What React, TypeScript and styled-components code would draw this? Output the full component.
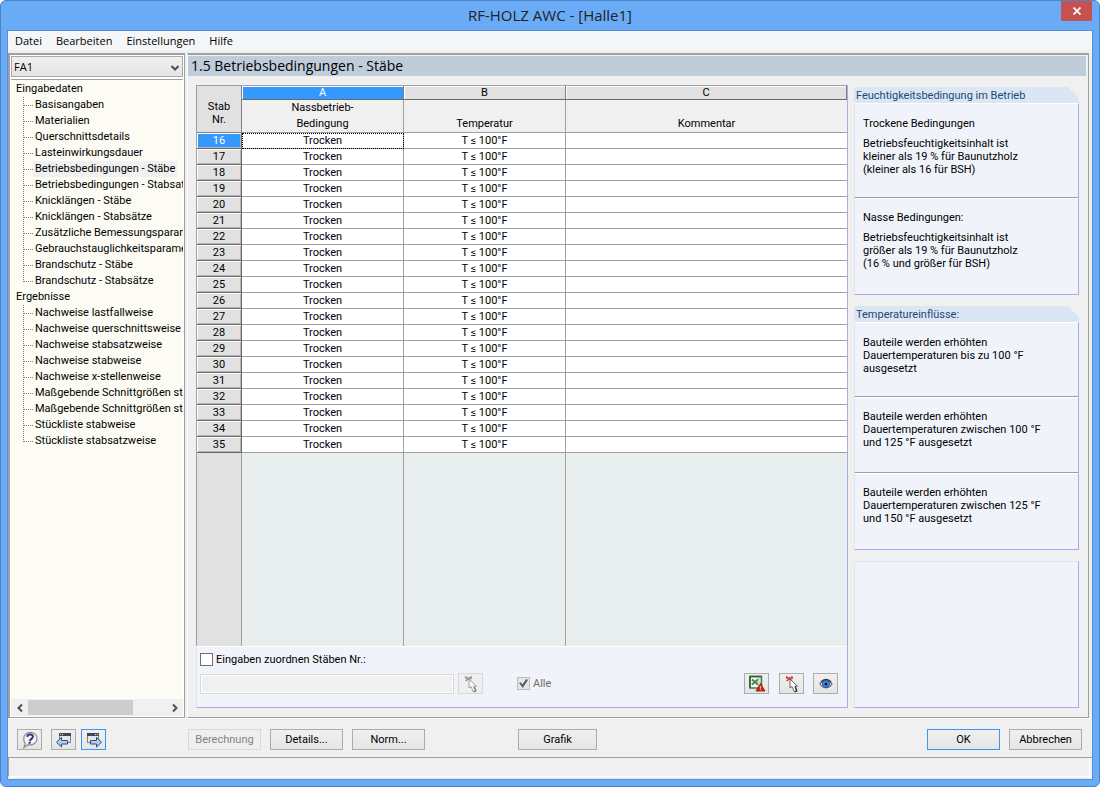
import React from 'react';
import styled, { createGlobalStyle, css } from 'styled-components';

const GlobalStyle = createGlobalStyle`
  *, *::before, *::after { box-sizing: border-box; }
  body {
    margin: 0;
    background: #fff;
    color: #000;
    font: 11px/13px Roboto, "Liberation Sans", sans-serif;
  }
  button, input, select { font: inherit; color: inherit; margin: 0; }
`;

const Window = styled.div`
  display: flex;
  flex-direction: column;
  min-height: 100vh;
  padding: 0 7px 7px;
  background: #6aabf7;
  border: 1px solid #4c84c0;
  border-radius: 6px;
`;

const TitleBar = styled.header`
  display: flex;
  height: 30px;
  padding-left: 31px;
`;

const WindowTitle = styled.h1`
  flex: 1;
  margin: 0;
  text-align: center;
  font: 15px/28px "Open Sans", sans-serif;
  color: #222;
`;

const CloseButton = styled.button`
  display: grid;
  place-items: center;
  width: 31px;
  height: 20px;
  padding: 0;
  border: 0;
  background: #c75050;
`;

const Client = styled.div`
  flex: 1;
  display: flex;
  flex-direction: column;
  background: #f0f0f0;
  outline: 1px solid #5390d8;
`;

const MenuBar = styled.nav`
  display: flex;
  height: 19px;
  margin-bottom: 3px;
  background: #f5f6f7;
`;

const MenuButton = styled.button`
  padding: 0 7px;
  border: 0;
  background: none;
  font: 11px/19px "Open Sans", sans-serif;
`;

const Body = styled.div`
  flex: 1;
  display: flex;
  gap: 2px;
  padding-right: 3px;
  border-bottom: 1px solid #fff;
`;

const Sidebar = styled.aside`
  display: flex;
  flex-direction: column;
  width: 177px;
  padding: 1px;
  background: #fff;
  border: 1px solid #a0a0a0;
  border-top-width: 2px;
  border-left-width: 2px;
`;

const CaseSelect = styled.div`
  position: relative;
  margin-bottom: 2px;
  svg { position: absolute; right: 4px; top: 8px; pointer-events: none; }
`;

const Select = styled.select`
  display: block;
  width: 100%;
  height: 21px;
  padding: 0 2px;
  appearance: none;
  border: 1px solid #a9a9a9;
  border-radius: 0;
  background: linear-gradient(#f0f0f0, #e4e4e4);
  font: 11px/19px "Open Sans", sans-serif;
`;

const Tree = styled.div`
  flex: 1;
  padding-top: 1px;
  overflow: hidden;
  border-top: 1px solid #a0a0a0;
  background: #fcfcf4;
`;

const TreeGroup = styled.section`
  h2 {
    margin: 0;
    padding-left: 5px;
    font-size: 11px;
    font-weight: 400;
    line-height: 16px;
  }
  ul { margin: 0; padding: 0 0 0 12px; list-style: none; }
`;

const TreeItem = styled.li`
  display: flex;
  height: 16px;
  &::before {
    content: '';
    flex: none;
    width: 10px;
    height: 9px;
    border-left: 1px dotted #808080;
    border-bottom: 1px dotted #808080;
  }
  &:not(:last-child) {
    background: repeating-linear-gradient(#808080 0 1px, transparent 1px 2px) left / 1px 100% no-repeat;
  }
  &:not(:last-child)::before { border-left: 0; }
`;

const TreeLink = styled.a<{ $active?: boolean }>`
  padding: 0 2px;
  line-height: 16px;
  color: inherit;
  text-decoration: none;
  white-space: nowrap;
  ${p => p.$active && css`background: #f0f0f0;`}
`;

const ScrollBar = styled.div`
  display: flex;
  height: 17px;
  padding: 1px 0;
  background: #f0f0f0;
`;

const ScrollArrow = styled.button`
  display: grid;
  place-items: center;
  width: 17px;
  padding: 0;
  border: 0;
  background: none;
`;

const ScrollTrack = styled.div`
  flex: 1;
  &::before { content: ''; display: block; width: 76%; height: 15px; background: #cdcdcd; }
`;

const Main = styled.main`
  flex: 1;
  display: flex;
  flex-direction: column;
  min-width: 0;
  padding: 1px 2px 9px 0;
  border: 1px solid #a0a0a0;
  border-top-width: 2px;
  border-left-color: #fff;
`;

const PageTitle = styled.h2`
  margin: 0 0 9px;
  padding-left: 3px;
  background: #bfccda;
  font: 14px/20px "Open Sans", sans-serif;
`;

const Columns = styled.div`
  flex: 1;
  display: flex;
  gap: 6px;
  padding: 0 7px 0 8px;
`;

const GridPanel = styled.section`
  flex: 1;
  display: flex;
  flex-direction: column;
  border-top: 1px solid #a0a0a0;
  border-right: 1px solid #aaaaee;
`;

const Table = styled.table`
  width: 100%;
  table-layout: fixed;
  border-collapse: separate;
  border-spacing: 0;
  border-left: 1px solid #a0a0a0;
  th, td { padding: 0; font-weight: 400; text-align: center; }
`;

const NumberCol = styled.col` width: 45px; `;
const DataCol = styled.col` width: 162px; `;

const ColumnLetter = styled.th<{ $active?: boolean }>`
  height: 14px;
  line-height: 13px;
  background: ${p => (p.$active ? '#3399ff' : '#e1e1e1')};
  color: ${p => (p.$active ? '#fff' : '#000')};
  border-right: 1px solid #808080;
  border-bottom: 1px solid #696969;
  box-shadow: inset 1px 1px #fff;
`;

const CornerHead = styled.th`
  && { padding-top: 8px; }
  height: 47px;
  background: #e1e1e1;
  border-right: 1px solid #808080;
  border-bottom: 1px solid #808080;
  vertical-align: middle;
`;

const ColumnTitle = styled.th`
  height: 33px;
  line-height: 16px;
  vertical-align: bottom;
  background: #f0f0f0;
  border-bottom: 1px solid #a0a0a0;
  &:not(:last-child) { border-right: 1px solid #a0a0a0; }
`;

const RowNumber = styled.th<{ $active?: boolean }>`
  height: 16px;
  line-height: 15px;
  background: ${p => (p.$active ? '#3399ff' : '#e1e1e1')};
  color: ${p => (p.$active ? '#fff' : '#000')};
  border-right: 1px solid #696969;
  border-bottom: 1px solid #696969;
  box-shadow: inset 1px 1px #fff, inset -1px -1px #b4b4b4;
`;

const Cell = styled.td<{ $active?: boolean }>`
  height: 16px;
  line-height: 15px;
  background: #fff;
  border-bottom: 1px solid #a0a0a0;
  &:not(:last-child) { border-right: 1px solid #a0a0a0; }
  ${p => p.$active && css`outline: 1px dotted #000; outline-offset: -1px;`}
`;

const EmptyGrid = styled.div`
  flex: 1;
  display: grid;
  grid-template-columns: 46px 162px 162px 1fr;
  border-bottom: 1px solid #fff;
  background: #e8eeee;
  span { border-right: 1px solid #a0a0a0; }
  span:first-child { background: #e1e1e1; border-left: 1px solid #a0a0a0; }
  span:last-child { border-right: 0; }
`;

const AssignBar = styled.div`
  display: flex;
  flex-direction: column;
  gap: 7px;
  padding: 6px 9px 13px 3px;
  background: #f0f4fa;
  border-left: 1px solid #dbe6f5;
  border-bottom: 1px solid #aaaaee;
`;

const AssignRow = styled.div`
  display: flex;
  align-items: center;
`;

const CheckLabel = styled.label<{ $disabled?: boolean }>`
  display: flex;
  align-items: center;
  gap: 3px;
  color: ${p => (p.$disabled ? '#6d6d6d' : '#000')};
`;

const CheckBox = styled.input`
  display: grid;
  place-items: center;
  width: 13px;
  height: 13px;
  appearance: none;
  border: 1px solid #707070;
  background: #fff;
  &:disabled { border-color: #bcbcbc; background: #e6e6e6; }
  &:checked::after {
    content: '';
    width: 9px;
    height: 9px;
    background: #606060;
    clip-path: polygon(0 45%, 20% 35%, 38% 58%, 80% 0, 100% 12%, 42% 100%);
  }
`;

const MemberInput = styled.input`
  width: 254px;
  height: 20px;
  margin-right: 4px;
  border: 1px solid #d9d9d9;
  box-shadow: inset 0 0 0 1px #fff;
  background: #f0f0f0;
`;

const Spacer = styled.span<{ $width?: number }>`
  flex: ${p => (p.$width ? `0 0 ${p.$width}px` : '1')};
`;

const PushButton = styled.button<{ $width?: number; $default?: boolean }>`
  display: grid;
  place-items: center;
  flex: none;
  width: ${p => p.$width ?? 73}px;
  height: 21px;
  padding: 0;
  border: 1px solid ${p => (p.$default ? '#3c96f0' : '#acacac')};
  background: linear-gradient(#f0f0f0, #e5e5e5);
  &:disabled { border-color: #d9d9d9; background: #efefef; color: #838383; }
  &:disabled svg { filter: grayscale(1); opacity: 0.6; }
`;

const InfoColumn = styled.aside`
  display: flex;
  flex-direction: column;
  gap: 11px;
  width: 225px;
  padding-top: 2px;
`;

const InfoGroup = styled.section`
  h3 {
    margin: 0;
    height: 16px;
    padding-left: 2px;
    background: #dbe6f5;
    clip-path: polygon(0 0, calc(100% - 11px) 0, 100% 11px, 100% 100%, 0 100%);
    font-size: 11px;
    font-weight: 400;
    line-height: 17px;
    color: #1c4a70;
  }
`;

const InfoBlock = styled.div<{ $height: number }>`
  min-height: ${p => p.$height}px;
  padding: 12px 8px 0;
  background: #f0f4fa;
  border-top: 1px solid #fff;
  border-left: 1px solid #dbe6f5;
  border-right: 1px solid #aaaaee;
  border-bottom: 1px solid #a0a0a0;
  &:first-of-type { padding-top: 13px; }
  &:last-child { border-bottom-color: #aaaaee; }
  p { margin: 0 0 7px; white-space: pre-line; }
`;

const PreviewBox = styled.div`
  flex: 1;
  background: #f0f4fa;
  border: 1px solid #dbe6f5;
  border-right-color: #aaaaee;
  border-bottom-color: #aaaaee;
`;

const Footer = styled.footer`
  display: flex;
  gap: 9px;
  padding: 10px 10px 7px 9px;
  border-bottom: 1px solid #a0a0a0;
`;

const PageButtons = styled.div`
  display: flex;
  gap: 5px;
`;

const StatusBar = styled.div`
  height: 19px;
  margin: 0 2px 2px 0;
  border-left: 1px solid #a0a0a0;
  border-right: 1px solid #fff;
  border-bottom: 1px solid #fff;
`;

const Chevron = ({ d }: { d: string }) => (
  <svg width="8" height="8" viewBox="0 0 8 8" fill="none" stroke="#505050" strokeWidth="2" aria-hidden="true">
    <path d={d} />
  </svg>
);

const HelpIcon = () => (
  <svg width="18" height="18" viewBox="0 0 18 18" aria-hidden="true">
    <path d="M9.500 1.500c3.900 0 6.500 2.500 6.500 6s-2.800 6.500-6.500 6.500c-.9 0-1.700-.1-2.400-.4L3 16.500l1.200-4.200C3.200 11.100 2.700 9.500 2.700 7.800c0-3.600 2.900-6.300 6.800-6.300z" fill="#f4f4f6" stroke="#909296" strokeWidth="1.300" />
    <path d="M6.300 5.900c.2-1.500 1.600-2.400 3.200-2.300 1.600.1 2.600 1 2.400 2.300-.3 1.900-2.700 2-3 4" fill="none" stroke="#2c3a80" strokeWidth="2" />
    <path d="M7.700 10.800h2.200l-.3 1.900H7.400z" fill="#2c3a80" />
  </svg>
);

const WindowArrowIcon = ({ next }: { next?: boolean }) => (
  <svg width="18" height="18" viewBox="0 0 18 18" aria-hidden="true">
    <g transform={next ? undefined : 'translate(18 0) scale(-1 1)'}>
      <rect x="2.500" y="2.500" width="11" height="9" fill="#e4e6ea" stroke="#7c828c" />
      <path d="M2 2h12v3H2z" fill="#3c4758" />
      <path d="M10 3h1v1h-1zM12 3h1v1h-1z" fill="#dfe5ee" />
      <path d="M5.500 9.500h6V6.500l5 4.700-5 4.800v-3h-6z" fill="#a9d0f8" stroke="#3b4a70" />
    </g>
  </svg>
);

const ExcelIcon = () => (
  <svg width="18" height="18" viewBox="0 0 18 18" aria-hidden="true">
    <rect x="2" y="1.500" width="11.500" height="11.500" fill="#f4f9f2" stroke="#47784a" strokeWidth="1.500" />
    <path d="M2 13V1.500h11.500" fill="none" stroke="#2c5e32" strokeWidth="1.500" />
    <path d="M9 4h4M10 7h3M9 10h3" stroke="#8fb98f" />
    <path d="M4 4.500l6 5M10 4.500l-6 5" stroke="#4a8550" strokeWidth="2.200" />
    <path d="M12.500 8.500l4.500 7.500H8z" fill="#d8231a" stroke="#8a130d" strokeWidth=".8" />
    <path d="M12.500 11v2.500M12.500 14.300v1" stroke="#ffc04a" strokeWidth="1.200" />
  </svg>
);

const PickIcon = () => (
  <svg width="18" height="18" viewBox="0 0 18 18" aria-hidden="true">
    <path d="M3 1.500l6 4M9.500 1.500l-6 4.500M3 3h7" stroke="#c8403c" strokeWidth="1.500" />
    <path d="M7 4v9l2-1.500 2.200 5c.2.600 2.800.2 2.500-1l-1.600-4.200h2.400z" fill="#fff" stroke="#666" />
    <path d="M12 11.500l1.800 4.300-2.200.9" fill="none" stroke="#222" strokeWidth="1.200" />
  </svg>
);

const EyeIcon = () => (
  <svg width="18" height="18" viewBox="0 0 18 18" aria-hidden="true">
    <path d="M3 9c3-5 9-5 12 0-3 5-9 5-12 0z" fill="#dfe9f8" stroke="#6a6f7a" strokeWidth="1.300" />
    <path d="M4 7c3-3.500 7-3.500 10 0" fill="none" stroke="#2b3040" strokeWidth="1.200" />
    <circle cx="9" cy="9" r="3.500" fill="#4a90ea" stroke="#23509c" />
    <circle cx="9" cy="9" r="1.500" fill="#0b1430" />
  </svg>
);

const tree = [
  {
    title: 'Eingabedaten',
    items: [
      'Basisangaben', 'Materialien', 'Querschnittsdetails', 'Lasteinwirkungsdauer',
      'Betriebsbedingungen - Stäbe', 'Betriebsbedingungen - Stabsatz', 'Knicklängen - Stäbe',
      'Knicklängen - Stabsätze', 'Zusätzliche Bemessungsparame', 'Gebrauchstauglichkeitsparamet',
      'Brandschutz - Stäbe', 'Brandschutz - Stabsätze',
    ],
  },
  {
    title: 'Ergebnisse',
    items: [
      'Nachweise lastfallweise', 'Nachweise querschnittsweise', 'Nachweise stabsatzweise',
      'Nachweise stabweise', 'Nachweise x-stellenweise', 'Maßgebende Schnittgrößen sta',
      'Maßgebende Schnittgrößen sta', 'Stückliste stabweise', 'Stückliste stabsatzweise',
    ],
  },
];

const currentPage = 'Betriebsbedingungen - Stäbe';
const members = Array.from({ length: 20 }, (_, i) => 16 + i);

export default function App() {
  return (
    <>
      <GlobalStyle />
      <Window>
        <TitleBar>
          <WindowTitle>RF-HOLZ AWC - [Halle1]</WindowTitle>
          <CloseButton aria-label="Schließen">
            <svg width="8" height="8" viewBox="0 0 8 8" stroke="#fff" strokeWidth="1.800">
              <path d="M.5.5l7 7M7.500.5l-7 7" />
            </svg>
          </CloseButton>
        </TitleBar>
        <Client>
          <MenuBar>
            {['Datei', 'Bearbeiten', 'Einstellungen', 'Hilfe'].map(m => <MenuButton key={m}>{m}</MenuButton>)}
          </MenuBar>
          <Body>
            <Sidebar>
              <CaseSelect>
                <Select aria-label="Bemessungsfall" defaultValue="FA1"><option>FA1</option></Select>
                <Chevron d="M0.500 2L4 5.500 7.500 2" />
              </CaseSelect>
              <Tree>
                {tree.map(group => (
                  <TreeGroup key={group.title}>
                    <h2>{group.title}</h2>
                    <ul>
                      {group.items.map((item, i) => (
                        <TreeItem key={i}>
                          <TreeLink href="#" $active={item === currentPage}>{item}</TreeLink>
                        </TreeItem>
                      ))}
                    </ul>
                  </TreeGroup>
                ))}
              </Tree>
              <ScrollBar>
                <ScrollArrow aria-label="Nach links"><Chevron d="M6 0.500L2.500 4 6 7.500" /></ScrollArrow>
                <ScrollTrack />
                <ScrollArrow aria-label="Nach rechts"><Chevron d="M2 0.500L5.500 4 2 7.500" /></ScrollArrow>
              </ScrollBar>
            </Sidebar>
            <Main>
              <PageTitle>1.5 Betriebsbedingungen - Stäbe</PageTitle>
              <Columns>
                <GridPanel>
                  <Table>
                    <colgroup><NumberCol /><DataCol /><DataCol /><col /></colgroup>
                    <thead>
                      <tr>
                        <CornerHead rowSpan={2}>Stab<br />Nr.</CornerHead>
                        <ColumnLetter $active>A</ColumnLetter>
                        <ColumnLetter>B</ColumnLetter>
                        <ColumnLetter>C</ColumnLetter>
                      </tr>
                      <tr>
                        <ColumnTitle>Nassbetrieb-<br />Bedingung</ColumnTitle>
                        <ColumnTitle>Temperatur</ColumnTitle>
                        <ColumnTitle>Kommentar</ColumnTitle>
                      </tr>
                    </thead>
                    <tbody>
                      {members.map((no, i) => (
                        <tr key={no}>
                          <RowNumber $active={i === 0}>{no}</RowNumber>
                          <Cell $active={i === 0}>Trocken</Cell>
                          <Cell>T ≤ 100°F</Cell>
                          <Cell />
                        </tr>
                      ))}
                    </tbody>
                  </Table>
                  <EmptyGrid><span /><span /><span /><span /></EmptyGrid>
                  <AssignBar>
                    <AssignRow>
                      <CheckLabel><CheckBox type="checkbox" />Eingaben zuordnen Stäben Nr.:</CheckLabel>
                    </AssignRow>
                    <AssignRow>
                      <MemberInput aria-label="Stäbe Nr." disabled />
                      <PushButton $width={25} disabled aria-label="Stäbe wählen"><PickIcon /></PushButton>
                      <Spacer $width={34} />
                      <CheckLabel $disabled><CheckBox type="checkbox" defaultChecked disabled />Alle</CheckLabel>
                      <Spacer />
                      <PushButton $width={25} aria-label="Excel-Export"><ExcelIcon /></PushButton>
                      <Spacer $width={10} />
                      <PushButton $width={25} aria-label="In Grafik wählen"><PickIcon /></PushButton>
                      <Spacer $width={9} />
                      <PushButton $width={25} aria-label="Ansicht"><EyeIcon /></PushButton>
                    </AssignRow>
                  </AssignBar>
                </GridPanel>
                <InfoColumn>
                  <InfoGroup>
                    <h3>Feuchtigkeitsbedingung im Betrieb</h3>
                    <InfoBlock $height={95}>
                      <p>Trockene Bedingungen</p>
                      <p>{'Betriebsfeuchtigkeitsinhalt ist\nkleiner als 19 % für Baunutzholz\n(kleiner als 16 für BSH)'}</p>
                    </InfoBlock>
                    <InfoBlock $height={97}>
                      <p>Nasse Bedingungen:</p>
                      <p>{'Betriebsfeuchtigkeitsinhalt ist\ngrößer als 19 % für Baunutzholz\n(16 % und größer für BSH)'}</p>
                    </InfoBlock>
                  </InfoGroup>
                  <InfoGroup>
                    <h3>Temperatureinflüsse:</h3>
                    <InfoBlock $height={75}>
                      <p>{'Bauteile werden erhöhten\nDauertemperaturen bis zu 100 °F\nausgesetzt'}</p>
                    </InfoBlock>
                    <InfoBlock $height={76}>
                      <p>{'Bauteile werden erhöhten\nDauertemperaturen zwischen 100 °F\nund 125 °F ausgesetzt'}</p>
                    </InfoBlock>
                    <InfoBlock $height={77}>
                      <p>{'Bauteile werden erhöhten\nDauertemperaturen zwischen 125 °F\nund 150 °F ausgesetzt'}</p>
                    </InfoBlock>
                  </InfoGroup>
                  <PreviewBox />
                </InfoColumn>
              </Columns>
            </Main>
          </Body>
          <Footer>
            <PushButton $width={25} aria-label="Hilfe"><HelpIcon /></PushButton>
            <PageButtons>
              <PushButton $width={25} aria-label="Vorherige Maske"><WindowArrowIcon /></PushButton>
              <PushButton $width={25} $default aria-label="Nächste Maske"><WindowArrowIcon next /></PushButton>
            </PageButtons>
            <Spacer $width={64} />
            <PushButton disabled>Berechnung</PushButton>
            <PushButton>Details...</PushButton>
            <PushButton>Norm...</PushButton>
            <Spacer $width={75} />
            <PushButton $width={79}>Grafik</PushButton>
            <Spacer />
            <PushButton $default>OK</PushButton>
            <PushButton>Abbrechen</PushButton>
          </Footer>
          <StatusBar />
        </Client>
      </Window>
    </>
  );
}
